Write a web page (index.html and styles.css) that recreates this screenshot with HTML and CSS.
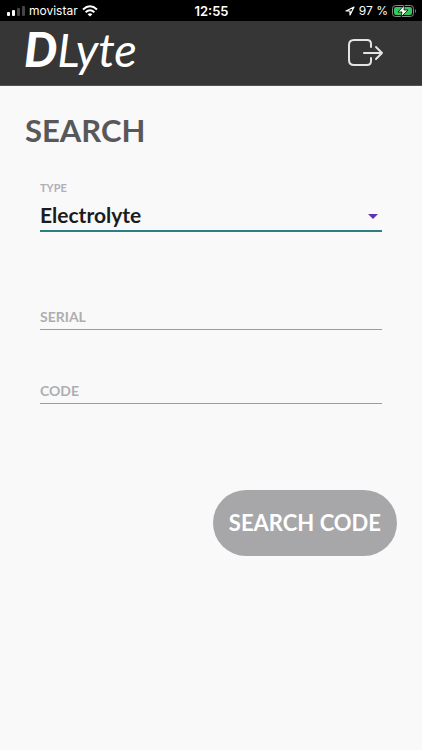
FILE: index.html
```html
<!DOCTYPE html>
<html lang="en">
<head>
<meta charset="utf-8">
<meta name="viewport" content="width=device-width, initial-scale=1">
<title>DLyte</title>
<link rel="stylesheet" href="styles.css">
</head>
<body>
<div class="status">
  <div class="status-side">
    <svg class="signal" width="18" height="10" viewBox="0 0 18 10" aria-hidden="true">
      <rect x="0" y="6" width="3" height="4" rx="1" fill="#fff"/>
      <rect x="5" y="4" width="3" height="6" rx="1" fill="#fff"/>
      <rect x="10" y="2" width="3" height="8" rx="1" fill="#444"/>
      <rect x="15" y="0" width="3" height="10" rx="1" fill="#444"/>
    </svg>
    <span>movistar</span>
    <svg class="wifi" width="16" height="12" viewBox="0 0 16 12" fill="none" stroke="#fff" stroke-width="2" aria-hidden="true">
      <path d="M1 4.4Q8-1.8 15 4.4M3.6 7.2Q8 3.4 12.4 7.2"/>
      <path d="M5.6 9.2Q8 7.2 10.4 9.2L8 11.6Z" fill="#fff" stroke="none"/>
    </svg>
  </div>
  <span class="clock">12:55</span>
  <div class="status-side status-end">
    <svg width="10" height="10" viewBox="0 0 10 10" fill="none" stroke="#fff" stroke-width="1.2" stroke-linejoin="round" aria-hidden="true">
      <path d="M9 1L1 5H5V9Z"/>
    </svg>
    <span>97 %</span>
    <svg width="24" height="12" viewBox="0 0 24 12" aria-hidden="true">
      <rect x=".5" y=".5" width="21" height="11" rx="3" fill="none" stroke="#888"/>
      <rect x="2" y="2" width="18" height="8" rx="2" fill="#35c759"/>
      <path d="M12.500 0L6 7H10L9 12L16 5H12Z" fill="#fff" stroke="#000" stroke-width=".8"/>
      <path d="M23 4Q25 6 23 8Z" fill="#888"/>
    </svg>
  </div>
</div>
<header class="header">
  <span class="logo"><b>D</b>Lyte</span>
  <button class="exit" type="button" aria-label="Log out">
    <svg width="36" height="28" viewBox="0 0 36 28" fill="none" stroke="#e4e4e4" stroke-width="2" stroke-linecap="round" stroke-linejoin="round" aria-hidden="true">
      <path d="M23 8V5Q23 1 19 1H6Q1 1 1 6V21Q1 26 6 26H19Q23 26 23 22V19"/>
      <path d="M16 14H34M28 8L34 14L28 20"/>
    </svg>
  </button>
</header>
<main class="main">
  <h1 class="title">SEARCH</h1>
  <form class="form">
    <div class="type">
      <label class="type-label" for="type">TYPE</label>
      <div class="select-wrap">
        <select class="select" id="type"><option>Electrolyte</option></select>
        <svg class="caret" width="10" height="5" viewBox="0 0 10 5" aria-hidden="true"><path d="M0 0H10L5 5Z" fill="#5e35b1"/></svg>
      </div>
    </div>
    <div class="field">
      <label for="serial">SERIAL</label>
      <input id="serial" type="text">
    </div>
    <div class="field">
      <label for="code">CODE</label>
      <input id="code" type="text">
    </div>
  </form>
  <button class="submit" type="button">SEARCH CODE</button>
</main>
</body>
</html>
```
FILE: styles.css
```css
* {
  box-sizing: border-box;
}

body {
  margin: 0;
  min-height: 100vh;
  background: #f9f9f9;
  font-family: Lato, sans-serif;
}

.status {
  display: grid;
  grid-template-columns: 1fr auto 1fr;
  align-items: center;
  height: 21px;
  padding: 0 6px 0 7px;
  background: #000;
  color: #fff;
  font: 12px/20px Inter, sans-serif;
}

.status-side {
  display: flex;
  align-items: center;
  gap: 4px;
}

.status-end {
  justify-content: flex-end;
}

.clock {
  font-size: 13px;
  font-weight: 600;
}

.header {
  display: flex;
  align-items: center;
  justify-content: space-between;
  height: 65px;
  padding: 0 38px 0 24px;
  background: #363636;
  border-bottom: 1px solid #555;
}

.logo {
  color: #fff;
  font-size: 47px;
  font-style: italic;
  font-weight: 400;
  line-height: 56px;
  padding-bottom: 8px;
}

.logo b {
  font-weight: 900;
}

.exit {
  display: flex;
  padding: 0;
  border: 0;
  background: none;
}

.main {
  display: flex;
  flex-direction: column;
  padding: 24px 25px;
}

.title {
  margin: 0;
  color: #58585a;
  font-size: 31px;
  font-weight: 700;
  line-height: 40px;
}

.form {
  display: flex;
  flex-direction: column;
  padding: 30px 15px 0;
}

.type {
  margin-bottom: 72px;
}

.type-label {
  display: block;
  color: #b0b0b6;
  font-size: 11px;
  font-weight: 700;
  line-height: 16px;
}

.select-wrap {
  display: grid;
  align-items: center;
  border-bottom: 2px solid #2b7f82;
}

.select {
  grid-area: 1 / 1;
  width: 100%;
  height: 34px;
  padding: 4px 0 0;
  border: 0;
  outline: 0;
  appearance: none;
  background: none;
  color: #1c1c1c;
  font: 700 21px/28px Lato, sans-serif;
}

.caret {
  grid-area: 1 / 1;
  justify-self: end;
  margin: 6px 4px 0 0;
  pointer-events: none;
}

.field {
  display: grid;
  margin-bottom: 48px;
}

.field label {
  grid-area: 1 / 1;
  align-self: center;
  color: #aeaeb2;
  font-size: 14px;
  font-weight: 700;
  line-height: 20px;
  pointer-events: none;
}

.field input {
  grid-area: 1 / 1;
  width: 100%;
  height: 26px;
  padding: 0;
  border: 0;
  border-bottom: 1px solid #9c9c9c;
  outline: 0;
  background: none;
  font: 700 14px/20px Lato, sans-serif;
}

.submit {
  align-self: flex-end;
  margin-top: 38px;
  padding: 19px 16px;
  border: 0;
  border-radius: 33px;
  background: #a7a7a9;
  color: #fff;
  font: 700 22px/28px Lato, sans-serif;
}
```
